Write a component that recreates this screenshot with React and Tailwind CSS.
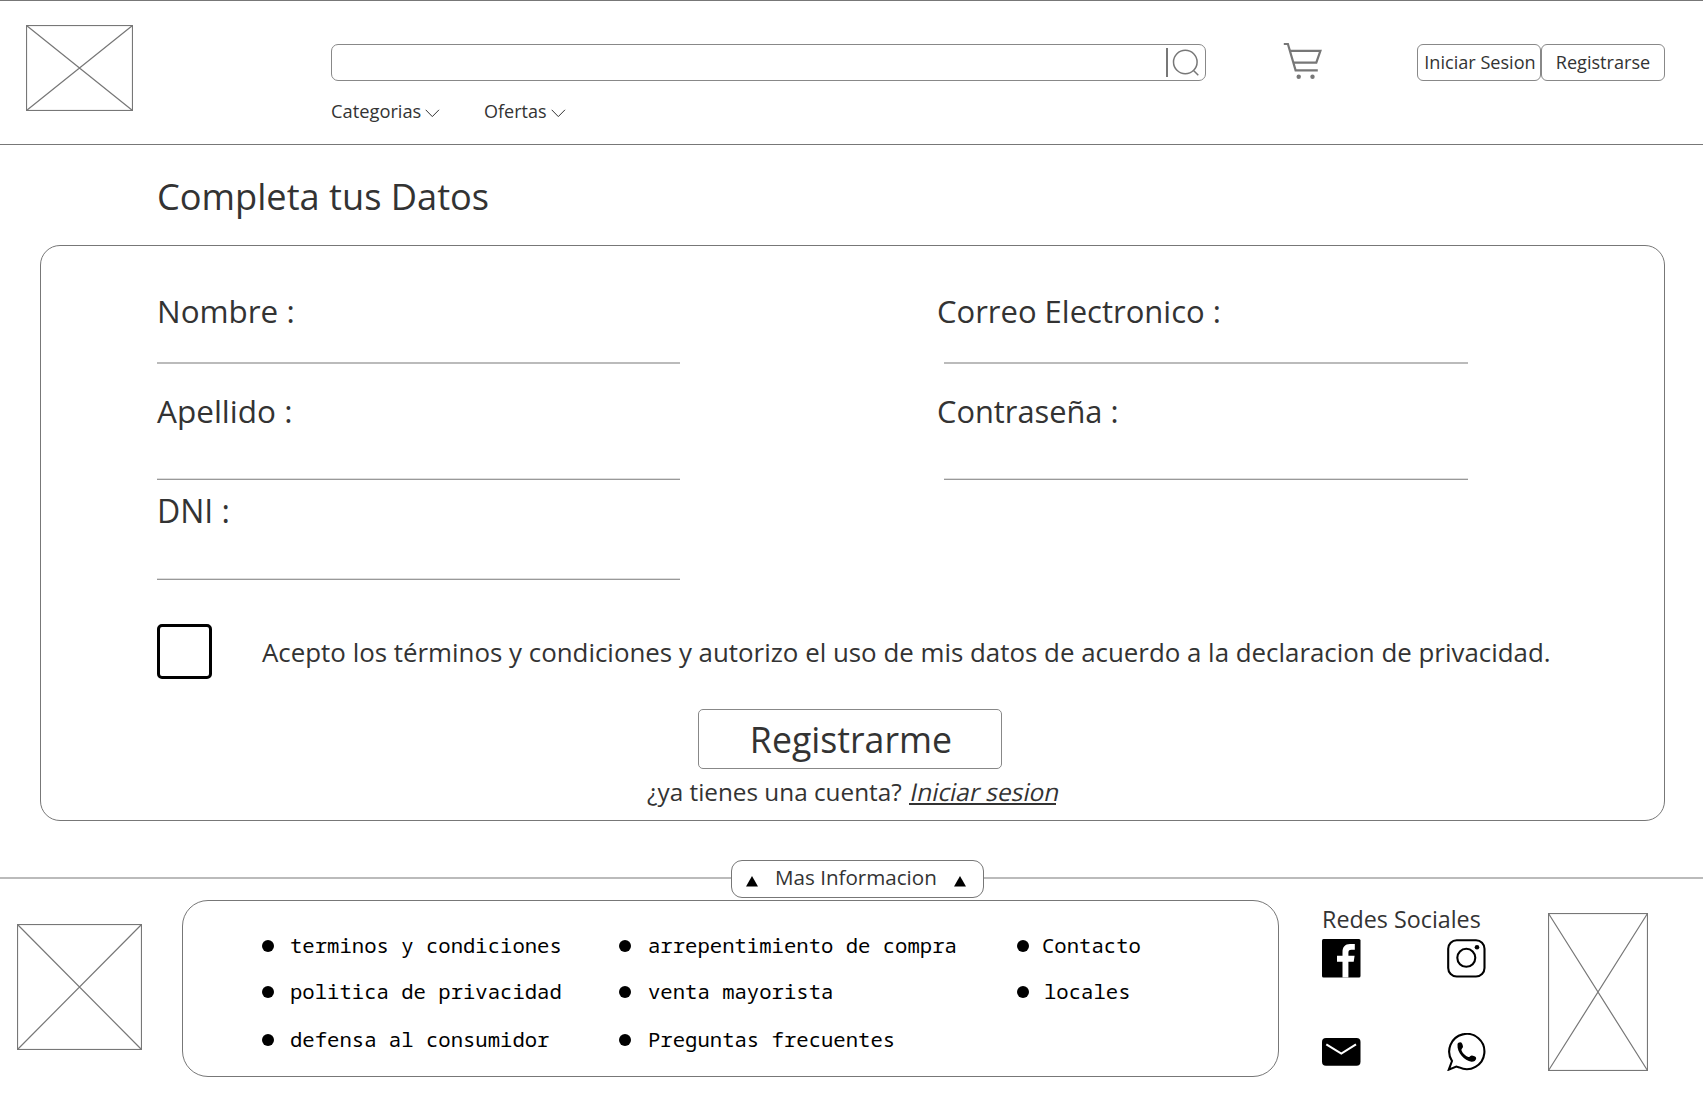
import React from "react";

function Placeholder({ w, h, className }) {
  return (
    <svg width={w} height={h} className={className} fill="none" stroke="#777777" strokeWidth="1.2">
      <rect x="0.5" y="0.5" width={w - 1} height={h - 1} />
      <path d={`M0.5 0.5 L${w - 0.5} ${h - 0.5} M${w - 0.5} 0.5 L0.5 ${h - 0.5}`} />
    </svg>
  );
}

function Chevron() {
  return (
    <svg width="15" height="9" className="mt-[5px]" fill="none" stroke="#333333" strokeWidth="1">
      <path d="M0.7 0.8 L7.3 7.6 L14 0.8" />
    </svg>
  );
}

function Triangle({ className }) {
  return (
    <svg width="12" height="11" className={className}>
      <path d="M6 0 L12 10.5 H0 Z" fill="#000" />
    </svg>
  );
}

function Header() {
  return (
    <header className="flex h-[145px] items-start border-y border-[#777777]">
      <Placeholder w={107} h={86} className="mt-6 ml-[26px]" />
      <div className="mt-[43px] ml-[198px] w-[875px]">
        <div className="flex h-[37px] items-center justify-end rounded-[7px] border border-[#888888] pr-[6px]">
          <div className="h-[29px] w-0.5 bg-[#777777]" />
          <svg width="27" height="27" className="ml-1" fill="none" stroke="#777777" strokeWidth="1.5">
            <circle cx="13.3" cy="13" r="11.8" />
            <path d="M21.5 21.5 L26.3 26.3" />
          </svg>
        </div>
        <nav className="mt-[18px] flex h-6 items-center leading-6">
          <div className="flex w-[153px] items-center gap-1 text-[18.3px]">Categorias<Chevron /></div>
          <div className="flex items-center gap-1 text-[18px]">Ofertas<Chevron /></div>
        </nav>
      </div>
      <svg width="40" height="38" className="mt-[41px] ml-[77px]" fill="none" stroke="#777777" strokeWidth="2.2">
        <path d="M0.8 2 H4.9 L12.6 28.4 H34.8" />
        <path d="M7 8.8 H37.4 L33.3 20.7 H10.5" />
        <circle cx="15.7" cy="34.7" r="2.2" fill="#777777" stroke="none" />
        <circle cx="29.5" cy="34.7" r="2.2" fill="#777777" stroke="none" />
      </svg>
      <div className="mt-[43px] ml-[94px] flex text-[18.1px]">
        <button className="h-[37px] w-[124px] rounded-[6px] border border-[#888888] pb-px pl-0.5 leading-none">Iniciar Sesion</button>
        <button className="h-[37px] w-[124px] rounded-[6px] border border-[#888888] pb-px leading-none">Registrarse</button>
      </div>
    </header>
  );
}

function SoftLine({ className }) {
  return <div className={`h-0.5 border-b border-[#999999] bg-[#dddddd] ${className}`} />;
}

function Form() {
  return (
    <section className="ml-10 mt-[25px] h-[576px] w-[1625px] rounded-[20px] border border-[#777777]">
      <div className="flex pl-[116px] pt-[43px] leading-[44px]">
        <div className="w-[780px]">
          <div className="h-11 text-[31.4px]">Nombre :</div>
          <div className="mt-[29px] h-0.5 w-[523px] bg-[#bbbbbb]" />
          <div className="mt-[25px] h-11 text-[31.5px]">Apellido :</div>
          <SoftLine className="mt-[45px] w-[523px]" />
          <div className="mt-[9px] h-11 text-[32px]">DNI :</div>
          <SoftLine className="mt-[45px] w-[523px]" />
        </div>
        <div>
          <div className="h-11 text-[31px]">Correo Electronico :</div>
          <div className="ml-[7px] mt-[29px] h-0.5 w-[524px] bg-[#bbbbbb]" />
          <div className="mt-[25px] h-11 text-[30.8px]">Contraseña :</div>
          <SoftLine className="ml-[7px] mt-[45px] w-[524px]" />
        </div>
      </div>
      <div className="ml-[116px] mt-11 flex items-center">
        <div className="size-[55px] rounded-[5px] border-3 border-black" />
        <p className="ml-[50px] text-[25.88px] leading-9 whitespace-nowrap">
          Acepto los términos y condiciones y autorizo el uso de mis datos de acuerdo a la declaracion de privacidad.
        </p>
      </div>
      <button className="ml-[657px] mt-[30px] block h-[60px] w-[304px] rounded-[5px] border border-[#888888] pt-0.5 pl-0.5 text-[35.7px] leading-none">
        Registrarme
      </button>
      <div className="ml-[606px] mt-[5px] flex leading-[36px] text-[24.3px]">
        <p className="w-[262px] whitespace-nowrap">¿ya tienes una cuenta?</p>
        <a className="h-[31px] w-[147px] border-b-2 border-[#333333] text-[24.5px] whitespace-nowrap">
          <span className="block origin-[50%_76%] -skew-x-12">Iniciar sesion</span>
        </a>
      </div>
    </section>
  );
}

const columns = [
  { gap: "gap-4", items: ["terminos y condiciones", "politica de privacidad", "defensa al consumidor"] },
  { gap: "gap-[17px]", items: ["arrepentimiento de compra", "venta mayorista", "Preguntas frecuentes"] },
  { gap: "gap-[13px]", items: ["Contacto", "locales"] },
];

function Footer() {
  return (
    <footer>
      <div className="mt-[39px] flex">
        <div className="mt-[17px] h-0.5 w-[731px] bg-[#bbbbbb]" />
        <div className="flex h-[38px] w-[253px] items-center rounded-[11px] border border-[#777777] pl-[14px] leading-7">
          <Triangle className="mt-1" />
          <span className="ml-[17px] -mt-1 w-[162px] text-[20.6px] whitespace-nowrap">Mas Informacion</span>
          <Triangle className="mt-1 ml-[17px]" />
        </div>
        <div className="mt-[17px] h-0.5 flex-1 bg-[#bbbbbb]" />
      </div>
      <div className="mt-0.5 flex items-start">
        <Placeholder w={125} h={126} className="mt-6 ml-[17px]" />
        <div className="ml-10 grid h-[177px] w-[1097px] grid-cols-[357px_398px_auto] rounded-[26px] border border-[#777777] pl-[79px] pt-[22px] text-black">
          {columns.map((col) => (
            <ul key={col.items[0]} className="grid grid-rows-[46px_46px_50px] content-start font-['Noto_Sans_Mono','DejaVu_Sans_Mono',monospace] text-[20.6px] leading-7 whitespace-nowrap">
              {col.items.map((item) => (
                <li key={item} className={`flex items-center ${col.gap}`}>
                  <span className="size-3 rounded-full bg-black" />
                  <span className="-mt-[3px]">{item === "locales" ? <span className="ml-0.5">{item}</span> : item}</span>
                </li>
              ))}
            </ul>
          ))}
        </div>
        <div className="ml-[43px] w-[164px] pt-[3px]">
          <h2 className="text-[23.3px] leading-8">Redes Sociales</h2>
          <div className="mt-1 grid grid-cols-[125px_39px] grid-rows-[39px_38px] items-center gap-y-[55px]">
            <svg width="39" height="39">
              <rect width="38.5" height="38.5" rx="1.5" fill="#000" />
              <path fill="#fff" d="M20.5 38.5V22.7H15V16.8H20.5V13C20.5 8 23 5 28 5H32.8V10.8H29.5C27 10.8 26.4 12 26.4 14V16.8H32.6L31.7 22.7H26.4V38.5Z" />
            </svg>
            <svg width="39" height="39" fill="none" stroke="#000" strokeWidth="2.1">
              <rect x="1.2" y="1.2" width="36.3" height="36.3" rx="8.5" />
              <circle cx="19.3" cy="18.8" r="9" />
              <circle cx="30" cy="8.3" r="2.3" fill="#000" stroke="none" />
            </svg>
            <svg width="39" height="28">
              <rect width="38.5" height="27.7" rx="4" fill="#000" />
              <path d="M4.3 6.3L19.3 15.6L34 6.3" fill="none" stroke="#fff" strokeWidth="2.1" />
            </svg>
            <svg width="39" height="38">
              <path d="M5 28A17.6 17.6 0 1 1 12.3 34.4L9.3 33.6L1.8 36.6Z" fill="none" stroke="#000" strokeWidth="2.1" />
              <path d="M10.5 11.5C10.5 10 12 9.3 13.3 9.3C14.8 9.3 15.6 11 16 13.5C16.2 15 14.2 15.8 14.4 17C15.2 19.8 18.5 23 21.3 24C22.6 24.3 23.6 22.2 25 22.4C27.5 22.8 29.2 23.8 29.2 25.2C29 27.8 26.8 28.8 24.5 28.7C17.5 28 9.8 19.5 10.5 11.5Z" />
            </svg>
          </div>
        </div>
        <Placeholder w={100} h={158} className="mt-[13px] ml-[62px]" />
      </div>
    </footer>
  );
}

export default function App() {
  return (
    <div className="h-[1101px] w-[1703px] overflow-hidden bg-white font-['Open_Sans','Noto_Sans',sans-serif] text-[#333333]">
      <Header />
      <h1 className="ml-[157px] mt-[27px] text-[36.2px] leading-[48px]">Completa tus Datos</h1>
      <Form />
      <Footer />
    </div>
  );
}
